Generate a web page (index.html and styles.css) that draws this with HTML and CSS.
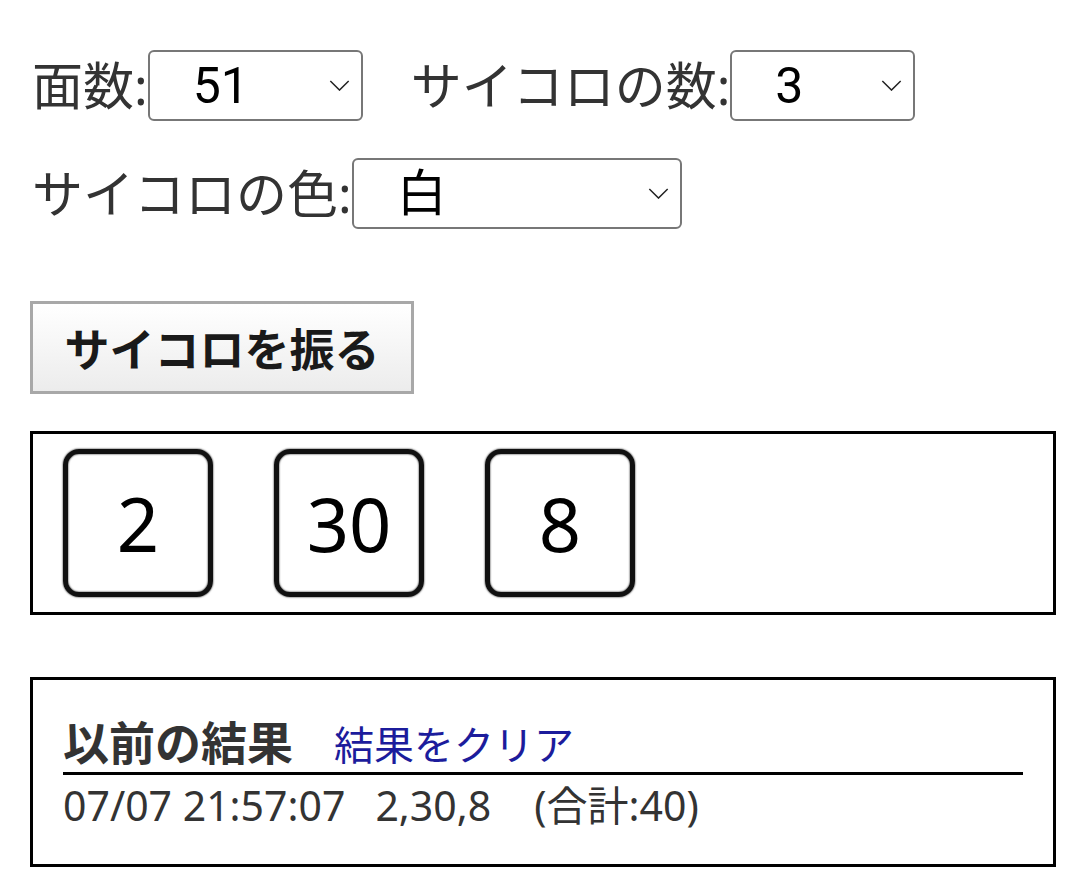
FILE: index.html
```html
<!DOCTYPE html>
<html lang="ja">
<head>
  <meta charset="UTF-8" />
  <meta name="viewport" content="width=device-width, initial-scale=1.0" />
  <title>サイコロ</title>
  <link rel="stylesheet" href="styles.css">
</head>
<body>
  <div class="settings">
    <div class="row">
      <label for="faces">面数:</label>
      <span class="select-wrap w-faces">
        <select id="faces"><option>51</option></select>
        <svg class="chev" viewBox="0 0 22 12"><path d="M1 1 L11 11 L21 1" /></svg>
      </span>
      <label for="count" class="second">サイコロの数:</label>
      <span class="select-wrap w-count">
        <select id="count"><option>3</option></select>
        <svg class="chev" viewBox="0 0 22 12"><path d="M1 1 L11 11 L21 1" /></svg>
      </span>
    </div>
    <div class="row">
      <label for="color">サイコロの色:</label>
      <span class="select-wrap w-color">
        <select id="color"><option>白</option></select>
        <svg class="chev" viewBox="0 0 22 12"><path d="M1 1 L11 11 L21 1" /></svg>
      </span>
    </div>
  </div>

  <button class="roll">サイコロを振る</button>

  <div class="dice-box">
    <div class="die">2</div>
    <div class="die">30</div>
    <div class="die">8</div>
  </div>

  <div class="history">
    <div class="history-head">
      <h2>以前の結果</h2>
      <a href="#" class="clear">結果をクリア</a>
    </div>
    <div class="log">
      <span class="time">07/07 21:57:07</span>
      <span class="nums">2,30,8</span>
      <span>(合計:40)</span>
    </div>
  </div>
</body>
</html>
```

FILE: styles.css
```css
body {
  margin: 0;
  padding: 50px 24px 30px 30px;
  font-family: "Noto Sans", "Noto Sans CJK JP", sans-serif;
  color: #333;
  background: #fff;
}
.settings {
  display: flex;
  flex-direction: column;
  gap: 37px;
}
.row {
  display: flex;
  align-items: center;
  height: 71px;
}
label {
  font-size: 51px;
  line-height: 71px;
  margin-left: 2px;
}
label.second {
  margin-left: 48px;
}
.select-wrap {
  position: relative;
  display: inline-block;
  height: 71px;
}
.w-faces { width: 215px; }
.w-count { width: 185px; }
.w-color { width: 330px; }
select {
  appearance: none;
  -webkit-appearance: none;
  width: 100%;
  height: 71px;
  box-sizing: border-box;
  border: 2px solid #777;
  border-radius: 6px;
  background: #fff;
  color: #000;
  font-family: Roboto, "Noto Sans CJK JP", sans-serif;
  font-size: 50px;
  padding: 0 0 0 43px;
  margin: 0;
}
.chev {
  position: absolute;
  right: 13px;
  top: 30px;
  width: 21px;
  height: 11px;
  pointer-events: none;
}
.chev path {
  fill: none;
  stroke: #222;
  stroke-width: 1.6;
}
.roll {
  display: block;
  margin-top: 72px;
  width: 384px;
  height: 93px;
  border: 3px solid #a8a8a8;
  border-radius: 0;
  background: linear-gradient(#ffffff, #ececec);
  color: #1a1a1a;
  font-family: "Noto Sans CJK JP", sans-serif;
  font-weight: bold;
  font-size: 45px;
  padding: 0;
}
.dice-box {
  margin-top: 37px;
  border: 3px solid #000;
  padding: 15px 30px;
  display: flex;
  gap: 61px;
}
.die {
  width: 150px;
  height: 148px;
  box-sizing: border-box;
  border: 5px solid #111;
  border-radius: 16px;
  box-shadow: 0 0 2px #000, inset 0 0 2px #000;
  display: flex;
  align-items: center;
  justify-content: center;
  font-family: "Noto Sans", sans-serif;
  font-size: 74px;
  color: #000;
}
.history {
  margin-top: 62px;
  border: 3px solid #000;
  padding: 32px 30px 29px 30px;
}
.history-head {
  display: flex;
  align-items: baseline;
  gap: 41px;
  border-bottom: 3px solid #000;
}
h2 {
  margin: 0;
  font-family: "Noto Sans CJK JP", sans-serif;
  font-size: 46px;
  font-weight: bold;
  color: #333;
  line-height: 56px;
}
.clear {
  color: #1c1c9c;
  text-decoration: none;
  font-family: "Noto Sans CJK JP", sans-serif;
  font-size: 40px;
}
.log {
  display: flex;
  font-size: 41px;
  line-height: 60px;
  color: #333;
}
.log .time {
  margin-right: 30px;
}
.log .nums {
  margin-right: 43px;
}
```
